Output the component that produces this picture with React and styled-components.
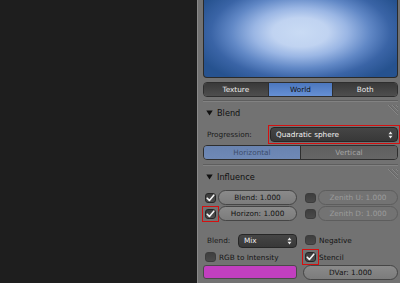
import React from 'react';
import styled, { createGlobalStyle } from 'styled-components';

const Global = createGlobalStyle`
  html, body { margin: 0; padding: 0; background: #1e1e1e; }
  body { font-family: "DejaVu Sans", "Liberation Sans", sans-serif; }
  * { box-sizing: border-box; }
`;

const Screen = styled.div`
  width: 400px;
  height: 283px;
  display: flex;
  overflow: hidden;
`;

const Viewport = styled.div`
  width: 197px;
  flex: none;
  background: #1e1e1e;
`;

const Properties = styled.div`
  flex: 1;
  background: #727272;
  border-left: 1px solid #8a8a8a;
  padding: 0 2px 0 5px;
  display: flex;
  flex-direction: column;
  font-size: 7.3px;
  color: #111;
`;

const Preview = styled.div`
  height: 78px;
  flex: none;
  border: 1px solid #2a2a2a;
  border-top: none;
  border-radius: 0 0 4px 4px;
  background: radial-gradient(
    ellipse 112px 58px at 50% 42%,
    #c9dbf4 0%,
    #c0d3f1 25%,
    #9ab6e4 42%,
    #6188c6 62%,
    #3a64a6 80%,
    #26528f 100%
  );
`;

const Segmented = styled.div`
  display: flex;
  height: ${p => p.$h}px;
  margin-top: ${p => p.$mt || 0}px;
  border: 1px solid #2e2e2e;
  border-radius: 4px;
  overflow: hidden;
  flex: none;
`;

const Segment = styled.div`
  flex: 1;
  display: flex;
  align-items: center;
  justify-content: center;
  border-left: ${p => (p.$first ? 'none' : '1px solid #2e2e2e')};
  ${p => {
    switch (p.$kind) {
      case 'active':
        return 'background: linear-gradient(#4c77be, #6690d4); color: #141414;';
      case 'dimActive':
        return 'background: linear-gradient(#6983b0, #6f89b6); color: #3d4d6b;';
      case 'dim':
        return 'background: linear-gradient(#5f5f5f, #666666); color: #a6a6a6;';
      default:
        return 'background: linear-gradient(#393939, #4e4e4e); color: #ececec;';
    }
  }}
`;

const Section = styled.section`
  margin-top: ${p => p.$mt || 0}px;
  border-top: 1px solid #5e5e5e;
  display: flex;
  flex-direction: column;
  flex: none;
  &::before {
    content: '';
    display: block;
    height: 1px;
    background: #828282;
  }
`;

const Header = styled.div`
  height: 22px;
  display: flex;
  align-items: center;
  padding-left: 3px;
  gap: 4px;
  font-size: 8.2px;
  color: #101010;
`;

const Hatch = styled.svg`
  margin-left: auto;
  align-self: flex-start;
  margin-top: 3px;
`;

const Body = styled.div`
  display: flex;
  flex-direction: column;
  gap: ${p => p.$gap || 0}px;
  padding: ${p => p.$pad};
`;

const LabelRow = styled.div`
  display: flex;
  align-items: center;
  height: ${p => p.$h}px;
`;

const Label = styled.span`
  width: ${p => p.$w}px;
  padding-left: 4px;
  color: #1a1a1a;
  flex: none;
`;

const Marked = styled.div`
  flex: ${p => (p.$grow ? 1 : 'none')};
  display: flex;
  flex-direction: column;
  outline: ${p => (p.$marked ? '1.5px solid #d41010' : 'none')};
  outline-offset: ${p => p.$off ?? 1}px;
`;

const Dropdown = styled.div`
  height: ${p => p.$h}px;
  width: ${p => (p.$w ? `${p.$w}px` : 'auto')};
  border: 1px solid #262626;
  border-radius: 4px;
  background: linear-gradient(#454545, #383838);
  color: #f2f2f2;
  display: flex;
  align-items: center;
  justify-content: space-between;
  padding: 0 4px 0 5px;
`;

const Grid = styled.div`
  display: grid;
  grid-template-columns: 94px 95px;
  column-gap: 6px;
  row-gap: ${p => p.$gap || 0}px;
  margin-top: ${p => p.$mt || 0}px;
`;

const Cell = styled.div`
  display: flex;
  align-items: center;
  height: ${p => p.$h}px;
  gap: ${p => p.$gap || 0}px;
  padding-left: ${p => p.$pl || 0}px;
`;

const Box = styled.div`
  width: 11px;
  height: 10px;
  flex: none;
  border-radius: 3px;
  border: 1px solid ${p => (p.$dim ? '#3c3c3c' : '#262626')};
  background: ${p => (p.$dim ? 'linear-gradient(#3e3e3e, #4a4a4a)' : 'linear-gradient(#3a3a3a, #4f4f4f)')};
  display: flex;
  align-items: center;
  justify-content: center;
`;

const Pill = styled.div`
  flex: 1;
  height: 15px;
  border-radius: 8px;
  border: 1px solid ${p => (p.$disabled ? '#5d5d5d' : '#454545')};
  background: ${p => (p.$disabled ? '#737373' : 'linear-gradient(#8a8a8a, #7c7c7c)')};
  color: ${p => (p.$disabled ? '#9c9c9c' : '#121212')};
  display: flex;
  align-items: center;
  justify-content: center;
`;

const CheckText = styled.span`
  color: #141414;
`;

const Swatch = styled.div`
  flex: 1;
  height: 14px;
  border: 1px solid #4a4a4a;
  border-radius: 3px;
  background: #c23fc0;
`;

const Check = () => (
  <svg width="9" height="8" viewBox="0 0 9 8">
    <path d="M1.2 4.2 L3.4 6.4 L7.8 1.2" fill="none" stroke="#f4f4f4" strokeWidth="1.6" strokeLinecap="round" strokeLinejoin="round" />
  </svg>
);

const Tri = () => (
  <svg width="7" height="6" viewBox="0 0 7 6">
    <path d="M0.3 0.5 H6.7 L3.5 5.6 Z" fill="#111" />
  </svg>
);

const UpDown = () => (
  <svg width="5" height="8" viewBox="0 0 5 8">
    <path d="M0.5 3.2 L2.5 0.6 L4.5 3.2 Z" fill="#e8e8e8" />
    <path d="M0.5 4.8 L2.5 7.4 L4.5 4.8 Z" fill="#e8e8e8" />
  </svg>
);

const Grip = () => (
  <Hatch width="11" height="10" viewBox="0 0 11 10">
    <g strokeWidth="1">
      <line x1="1" y1="0" x2="11" y2="10" stroke="#868686" />
      <line x1="2" y1="0" x2="12" y2="10" stroke="#666666" />
      <line x1="5" y1="0" x2="12" y2="7" stroke="#868686" />
      <line x1="6" y1="0" x2="12" y2="6" stroke="#666666" />
      <line x1="9" y1="0" x2="12" y2="3" stroke="#868686" />
      <line x1="10" y1="0" x2="12" y2="2" stroke="#666666" />
    </g>
  </Hatch>
);

const CheckBox = ({ checked, marked }) => (
  <Marked $marked={marked} $off={2}>
    <Box $dim={!checked}>{checked && <Check />}</Box>
  </Marked>
);

const CheckPill = ({ checked, marked, disabled, children }) => (
  <Cell $h={15} $gap={2} $pl={2}>
    <CheckBox checked={checked} marked={marked} />
    <Pill $disabled={disabled}>{children}</Pill>
  </Cell>
);

const CheckLabel = ({ checked, marked, children }) => (
  <Cell $h={14} $gap={3} $pl={2}>
    <CheckBox checked={checked} marked={marked} />
    <CheckText>{children}</CheckText>
  </Cell>
);

export default function App() {
  return (
    <>
      <Global />
      <Screen>
        <Viewport />
        <Properties>
          <Preview />
          <Segmented $h={15} $mt={4}>
            <Segment $first>Texture</Segment>
            <Segment $kind="active">World</Segment>
            <Segment>Both</Segment>
          </Segmented>

          <Section $mt={3}>
            <Header>
              <Tri />
              <span>Blend</span>
              <Grip />
            </Header>
            <Body $pad="3px 0 4px" $gap={3}>
              <LabelRow $h={15}>
                <Label $w={67}>Progression:</Label>
                <Marked $grow $marked>
                  <Dropdown $h={15}>
                    <span>Quadratic sphere</span>
                    <UpDown />
                  </Dropdown>
                </Marked>
              </LabelRow>
              <Segmented $h={15}>
                <Segment $first $kind="dimActive">Horizontal</Segment>
                <Segment $kind="dim">Vertical</Segment>
              </Segmented>
            </Body>
          </Section>

          <Section>
            <Header>
              <Tri />
              <span>Influence</span>
              <Grip />
            </Header>
            <Grid $gap={1} $mt={2}>
              <CheckPill checked>Blend: 1.000</CheckPill>
              <CheckPill disabled>Zenith U: 1.000</CheckPill>
              <CheckPill checked marked>Horizon: 1.000</CheckPill>
              <CheckPill disabled>Zenith D: 1.000</CheckPill>
            </Grid>
            <Grid $mt={12} $gap={2}>
              <Cell $h={15}>
                <Label $w={35}>Blend:</Label>
                <Dropdown $h={14} $w={59}>
                  <span>Mix</span>
                  <UpDown />
                </Dropdown>
              </Cell>
              <CheckLabel>Negative</CheckLabel>
              <CheckLabel>RGB to Intensity</CheckLabel>
              <CheckLabel checked marked>Stencil</CheckLabel>
            </Grid>
            <Grid $mt={1}>
              <Cell $h={14}>
                <Swatch />
              </Cell>
              <Cell $h={14}>
                <Pill>DVar: 1.000</Pill>
              </Cell>
            </Grid>
          </Section>
        </Properties>
      </Screen>
    </>
  );
}
